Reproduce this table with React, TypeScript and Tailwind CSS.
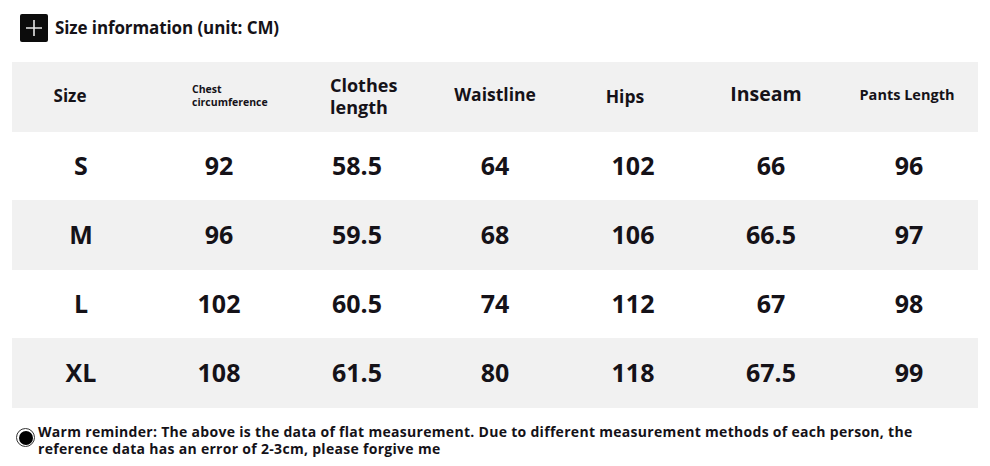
import React from 'react';

const rows = [
  ['S', '92', '58.5', '64', '102', '66', '96'],
  ['M', '96', '59.5', '68', '106', '66.5', '97'],
  ['L', '102', '60.5', '74', '112', '67', '98'],
  ['XL', '108', '61.5', '80', '118', '67.5', '99'],
];

export default function App() {
  return (
    <div
      className="w-[990px] h-[466px] bg-white text-[#151218] overflow-hidden"
      style={{ fontFamily: '"Open Sans", "Noto Sans", sans-serif' }}
    >
      {/* Title */}
      <div className="flex items-center h-[56px] pl-[20px] gap-[7px]">
        <div className="w-[28px] h-[28px] bg-[#0c0c0c] rounded-[2px] flex items-center justify-center">
          <svg width="18" height="18" viewBox="0 0 18 18">
            <path d="M9 1v16M1 9h16" stroke="#e5e5e5" strokeWidth="1.6" />
          </svg>
        </div>
        <span className="text-[17px] font-bold tracking-[-0.1px] -mt-[1px]">Size information (unit: CM)</span>
      </div>

      {/* Table */}
      <div className="mx-[12px] w-[966px] mt-[6px]">
        <div className="grid grid-cols-7 h-[70px] bg-[#f1f1f1] items-center font-bold">
          <div className="text-center pr-[22px] text-[17px] -mt-[3px]">Size</div>
          <div className="pl-[42px] text-[10.5px] leading-[13px] -mt-[3px]">
            Chest
            <br />
            circumference
          </div>
          <div className="pl-[42px] text-[18px] leading-[22px] -mt-[2px]">
            Clothes
            <br />
            length
          </div>
          <div className="text-center text-[17.5px] -mt-[6px]">Waistline</div>
          <div className="text-center pr-[16px] text-[17.5px] -mt-[2px]">Hips</div>
          <div className="text-center pr-[10px] text-[19.5px] -mt-[6px]">Inseam</div>
          <div className="text-center pr-[4px] text-[14.5px] -mt-[5px]">Pants Length</div>
        </div>
        {rows.map((r, i) => (
          <div
            key={r[0]}
            className={`grid grid-cols-7 items-center font-bold text-[25px] ${
              i % 2 === 1 ? 'bg-[#f1f1f1] h-[70px]' : 'bg-white h-[68px]'
            }`}
          >
            {r.map((c, j) => (
              <div key={j} className="text-center">
                {c}
              </div>
            ))}
          </div>
        ))}
      </div>

      {/* Footer note */}
      <div className="flex items-start pl-[16px] pt-[15px] gap-[3px]">
        <div className="mt-[5px] w-[19px] h-[19px] rounded-full border-[1.5px] border-[#333] flex items-center justify-center shrink-0">
          <div className="w-[14px] h-[14px] rounded-full bg-black" />
        </div>
        <p className="text-[14px] leading-[17px] font-bold tracking-[0.3px] w-[900px]">
          Warm reminder: The above is the data of flat measurement. Due to different measurement methods of each person, the reference data has an error of 2-3cm, please forgive me
        </p>
      </div>
    </div>
  );
}
